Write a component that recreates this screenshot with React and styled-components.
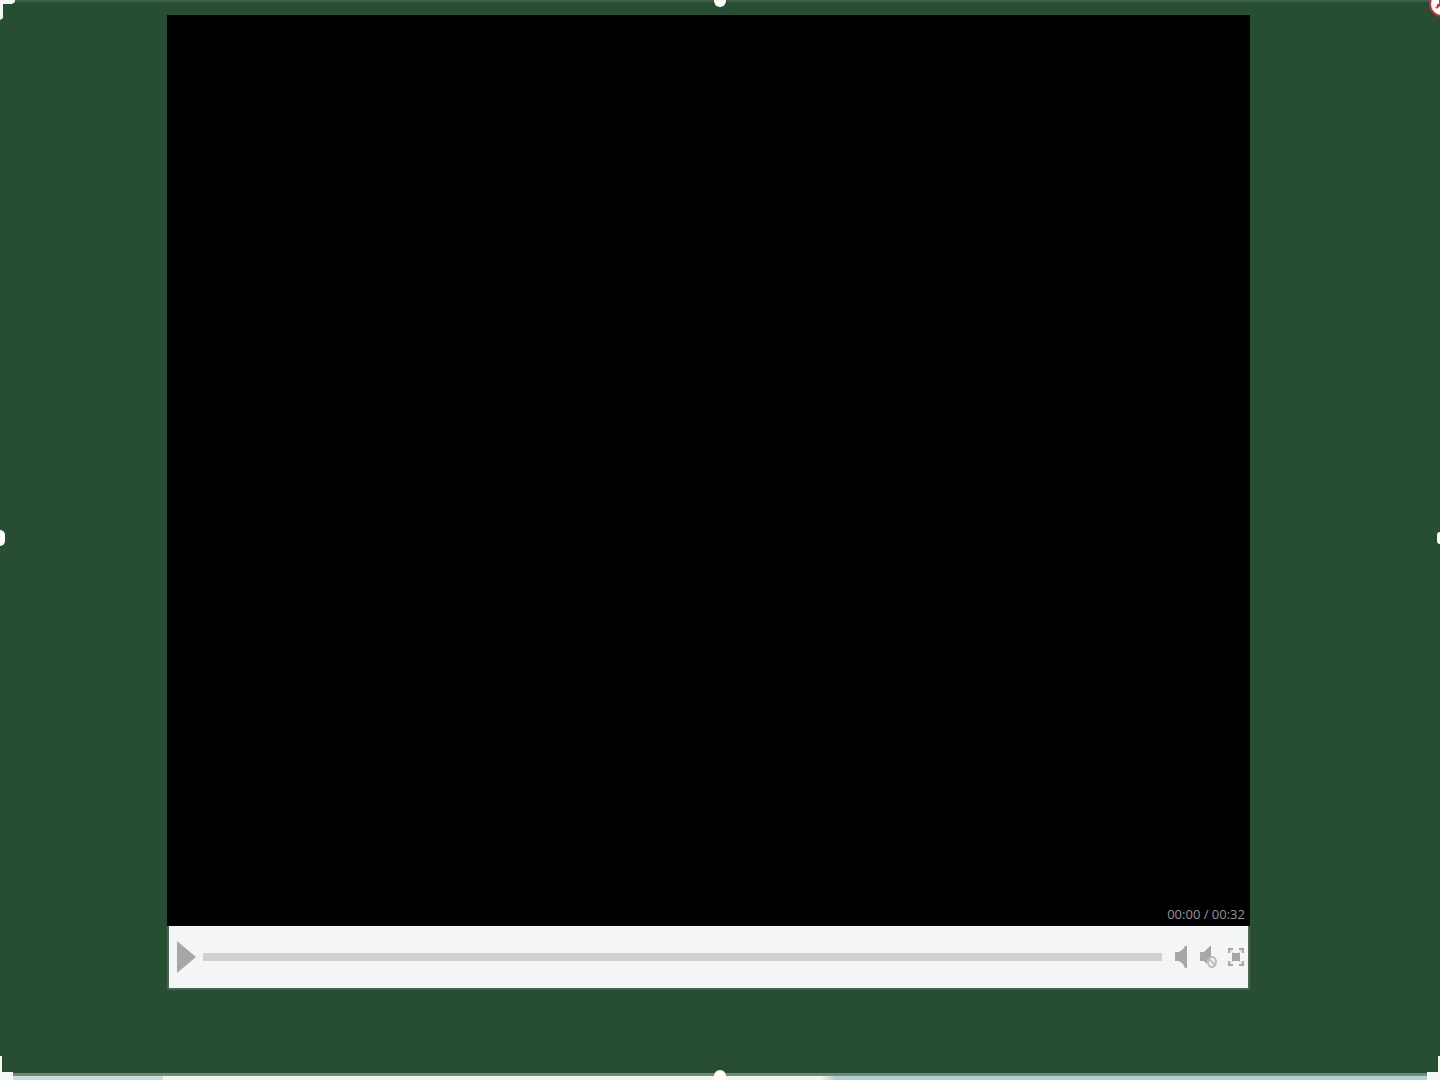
import React, { useState } from "react";
import styled, { createGlobalStyle } from "styled-components";

const GlobalStyle = createGlobalStyle`
  body {
    margin: 0;
    background: #274d33;
    font-family: "Open Sans", "Liberation Sans", sans-serif;
  }
`;

const Slide = styled.div`
  position: relative;
  display: flex;
  flex-direction: column;
  min-height: 100vh;
  overflow: hidden;
  background: linear-gradient(#3a6148 2px, #274d33 2px);
`;

const Stage = styled.main`
  flex: 1;
  display: flex;
  padding: 15px 190px 83px 167px;
`;

const Player = styled.section`
  flex: 1;
  display: flex;
  flex-direction: column;
`;

const Screen = styled.div`
  flex: 1;
  display: flex;
  align-items: flex-end;
  justify-content: flex-end;
  padding: 0 5px 3px;
  background: #000;
`;

const Time = styled.span`
  font-size: 13px;
  line-height: 18px;
  color: #969696;
`;

const Controls = styled.div`
  display: flex;
  align-items: center;
  height: 62px;
  padding: 0 4px 0 8px;
  background: #f4f5f7;
  border: solid #4c6254;
  border-width: 0 2px 2px;
`;

const IconButton = styled.button`
  display: flex;
  flex: none;
  margin: 0;
  padding: 0;
  border: 0;
  background: none;
  color: #a7a7a9;
  cursor: pointer;
`;

const Seek = styled.input`
  appearance: none;
  flex: 1;
  min-width: 0;
  height: 8px;
  margin: 0 12px 0 7px;
  background: #d0d0d1;
  cursor: pointer;

  &::-webkit-slider-thumb {
    appearance: none;
    width: 1px;
    height: 8px;
    background: #d0d0d1;
  }
`;

const Tools = styled.div`
  display: flex;
  align-items: center;
  gap: 10px;
`;

const Strip = styled.footer`
  height: 4px;
  border-top: 3px solid #71877a;
  background: linear-gradient(
    to right,
    #c8dedb 0 163px,
    #f3f5ef 163px 57%,
    #add2cf 58%
  );
`;

const Handle = styled.span`
  position: absolute;
  top: ${props => props.$top};
  left: ${props => props.$left};
  width: ${props => props.$width || "12px"};
  height: ${props => props.$height || "16px"};
  border-radius: 6px;
  background: #fff;
  transform: translate(-50%, -50%);
`;

const Corner = styled.svg`
  position: absolute;
  ${props => props.$y}: 0;
  ${props => props.$x}: 0;
  fill: #f5f7f5;
`;

const Badge = styled.svg`
  position: absolute;
  top: -10px;
  right: -16px;
`;

const App = () => {
  const [position, setPosition] = useState(0);

  return (
    <>
      <GlobalStyle />
      <Slide>
        <Stage>
          <Player>
            <Screen>
              <Time>00:00 / 00:32</Time>
            </Screen>
            <Controls>
              <IconButton aria-label="Play">
                <svg width="19" height="32" viewBox="0 0 19 32">
                  <path d="M0 0 19 16 0 32Z" fill="currentColor" />
                </svg>
              </IconButton>
              <Seek
                type="range"
                aria-label="Seek"
                min="0"
                max="32"
                value={position}
                onChange={e => setPosition(Number(e.target.value))}
              />
              <Tools>
                <IconButton aria-label="Volume">
                  <svg width="15" height="24" viewBox="0 0 15 24">
                    <path d="M1 7h4l4-3 2-3h2v22h-2l-2-4-4-3H1Z" fill="currentColor" />
                  </svg>
                </IconButton>
                <IconButton aria-label="Mute">
                  <svg width="19" height="24" viewBox="0 0 19 24">
                    <path d="M1 7h4l4-4 2-2h1v10l-4 4v4l-3-3H1Z" fill="currentColor" />
                    <g fill="none" stroke="#bbbbbd" strokeWidth="2">
                      <ellipse cx="13" cy="17" rx="4" ry="5" />
                      <path d="m10 14 6 6" />
                    </g>
                  </svg>
                </IconButton>
                <IconButton aria-label="Full screen">
                  <svg width="16" height="20" viewBox="0 0 16 20">
                    <path d="M4 6h8v8H4Z" fill="currentColor" />
                    <path
                      d="M1 6V2h4M11 2h4v4M15 14v4h-4M5 18H1v-4"
                      fill="none"
                      stroke="currentColor"
                      strokeWidth="2"
                    />
                    <path
                      d="m2 3 3 3M14 3l-3 3M14 17l-3-3M2 17l3-3"
                      stroke="#cfcfd1"
                      strokeWidth="1"
                    />
                  </svg>
                </IconButton>
              </Tools>
            </Controls>
          </Player>
        </Stage>
        <Strip />

        <Corner $x="left" $y="top" width="16" height="20">
          <path d="M0 0h15v2l-3 2H3v14l-3 2Z" />
        </Corner>
        <Corner $x="left" $y="bottom" width="16" height="24">
          <path d="M0 0h2v16h11v8H0Z" />
        </Corner>
        <Corner $x="right" $y="bottom" width="16" height="24">
          <path d="M14 0h2v24H3v-8h11Z" />
        </Corner>
        <Handle $top="-1px" $left="50%" />
        <Handle $top="538px" $left="0" $width="10px" />
        <Handle $top="538px" $left="100%" $width="6px" $height="12px" />
        <Handle $top="100%" $left="50%" $height="20px" />
        <Badge width="28" height="28" viewBox="0 0 28 28">
          <circle cx="14" cy="14" r="12" fill="#fff" stroke="#c9302f" strokeWidth="2" />
          <path d="M12 10v5M12 15h-3M8 18l4-3" fill="none" stroke="#c43a3a" strokeWidth="2" />
        </Badge>
      </Slide>
    </>
  );
};

export default App;
